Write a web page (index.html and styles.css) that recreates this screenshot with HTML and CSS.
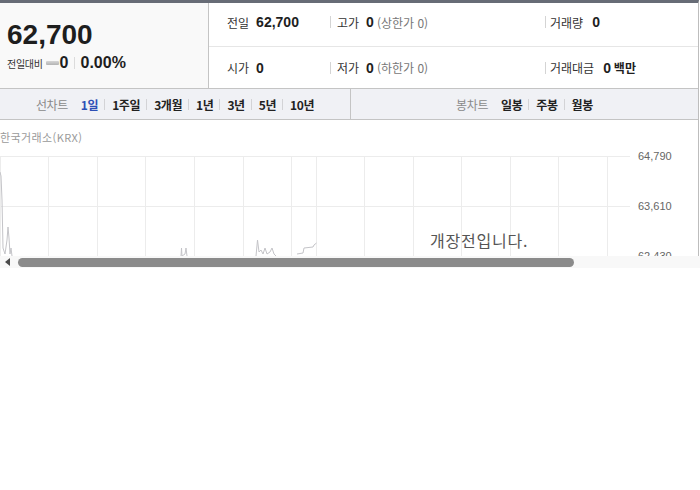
FILE: index.html
```html
<!DOCTYPE html>
<html lang="ko">
<head>
<meta charset="utf-8">
<title>시세</title>
<link rel="stylesheet" href="styles.css">
</head>
<body>
<div class="wrap">
  <div class="summary">
    <div class="price">
      <div class="now">62,700</div>
      <div class="change">
        <span class="lbl">전일대비</span><span class="flat"></span><span class="num">0</span><span class="vsep"></span><span class="num">0.00%</span>
      </div>
    </div>
    <div class="info">
      <div class="cell top first"><span class="k">전일</span><b class="v">62,700</b></div>
      <div class="cell top sep"><span class="k">고가</span><b class="v">0</b><span class="sub">(상한가 0)</span></div>
      <div class="cell top sep last"><span class="k wide">거래량</span><b class="v">0</b></div>
      <div class="cell first"><span class="k">시가</span><b class="v">0</b></div>
      <div class="cell sep"><span class="k">저가</span><b class="v">0</b><span class="sub">(하한가 0)</span></div>
      <div class="cell sep last"><span class="k wide">거래대금</span><b class="v">0 <span class="unit">백만</span></b></div>
    </div>
  </div>
  <div class="tabs">
    <div class="group left">
      <span class="gl">선차트</span>
      <span class="it on">1일</span><span class="ts"></span>
      <span class="it">1주일</span><span class="ts"></span>
      <span class="it">3개월</span><span class="ts"></span>
      <span class="it">1년</span><span class="ts"></span>
      <span class="it">3년</span><span class="ts"></span>
      <span class="it">5년</span><span class="ts"></span>
      <span class="it">10년</span>
    </div>
    <div class="group">
      <span class="gl">봉차트</span>
      <span class="it">일봉</span><span class="ts"></span>
      <span class="it">주봉</span><span class="ts"></span>
      <span class="it">월봉</span>
    </div>
  </div>
  <div class="chart">
    <div class="chart-label">한국거래소(KRX)</div>
    <svg class="plot" width="697" height="106" viewBox="0 0 697 106">
      <g stroke="#ececec" stroke-width="1" fill="none" shape-rendering="crispEdges">
        <line x1="0" y1="6.5" x2="630" y2="6.5"/>
        <line x1="0" y1="56.5" x2="630" y2="56.5"/>
        <line x1="0.5" y1="6" x2="0.5" y2="106"/>
        <line x1="48.5" y1="6" x2="48.5" y2="106"/>
        <line x1="97.5" y1="6" x2="97.5" y2="106"/>
        <line x1="145.5" y1="6" x2="145.5" y2="106"/>
        <line x1="194.5" y1="6" x2="194.5" y2="106"/>
        <line x1="243.5" y1="6" x2="243.5" y2="106"/>
        <line x1="291.5" y1="6" x2="291.5" y2="106"/>
        <line x1="316.5" y1="6" x2="316.5" y2="106"/>
        <line x1="364.5" y1="6" x2="364.5" y2="106"/>
        <line x1="413.5" y1="6" x2="413.5" y2="106"/>
        <line x1="461.5" y1="6" x2="461.5" y2="106"/>
        <line x1="510.5" y1="6" x2="510.5" y2="106"/>
        <line x1="558.5" y1="6" x2="558.5" y2="106"/>
        <line x1="607.5" y1="6" x2="607.5" y2="106"/>
      </g>
      <g stroke="#c4c4c8" stroke-width="1" fill="none">
        <polyline points="0,22 1,26 2,50 3,98 5,104 7,90 8,77 9,88 10,104 11,98 12,106"/>
        <polyline points="181,106 181.5,98 182,106 185,104 186,98 187,106"/>
        <polyline points="256,106 257.5,90 259,102 261,100 263,104 265,98 267,104 270,102 272,98 274,104 276,106"/>
        <polyline points="297,104 303,103 304,98 313,97 314,95 316.5,93"/>
      </g>
      <g class="axis">
        <text x="638" y="10">64,790</text>
        <text x="638" y="60">63,610</text>
        <text x="638" y="110">62,430</text>
      </g>
    </svg>
    <div class="msg">개장전입니다.</div>
  </div>
</div>
<div class="hscroll">
  <span class="arrow"></span>
  <span class="thumb"></span>
</div>
</body>
</html>
```

FILE: styles.css
```css
* { box-sizing: border-box; margin: 0; padding: 0; }
html, body { background: #fff; }
body {
  margin: 0;
  width: 700px;
  font-family: "Liberation Sans", "Noto Sans CJK KR", sans-serif;
  color: #222;
}
.wrap {
  width: 699px;
  border-top: 3px solid #676c76;
  border-right: 1px solid #bdbdbd;
}
.summary {
  display: flex;
  height: 86px;
  border-bottom: 1px solid #c4c4c4;
}
.price {
  width: 209px;
  background: #f9f9f9;
  border-right: 1px solid #c4c4c4;
  padding: 18px 0 0 7px;
}
.now {
  font-size: 28px;
  line-height: 28px;
  font-weight: bold;
  color: #1e1e1e;
}
.change {
  display: flex;
  align-items: center;
  height: 18px;
  margin-top: 5px;
}
.change .lbl {
  font-family: "Noto Sans CJK KR", sans-serif;
  font-size: 10px;
  color: #333;
  letter-spacing: -0.3px;
}
.flat {
  display: inline-block;
  width: 13px;
  height: 4px;
  margin: 0 1px 0 3px;
  background: linear-gradient(#d6d6d6, #b3b3b3);
  border-radius: 1px;
}
.change .num {
  font-size: 16px;
  font-weight: bold;
  color: #1e1e1e;
}
.vsep {
  display: inline-block;
  width: 1px;
  height: 12px;
  background: #dcdcdc;
  margin: 0 6px 0 5px;
}
.info {
  flex: 1;
  display: grid;
  grid-template-columns: 121px 215px 1fr;
  grid-template-rows: 44px 41px;
}
.cell {
  display: flex;
  align-items: center;
  font-size: 12px;
}
.cell.top {
  border-bottom: 1px solid #e6e6e6;
  padding-bottom: 5px;
}
.cell.first { padding-left: 18px; }
.cell.sep::before {
  content: "";
  display: inline-block;
  width: 1px;
  height: 12px;
  background: #d4d4d4;
  margin-right: 6px;
}
.cell.last::before { margin-right: 4px; }
.k {
  font-family: "Noto Sans CJK KR", sans-serif;
  font-size: 12px;
  color: #333;
  margin-right: 7px;
}
.k.wide { margin-right: 9px; }
.v {
  font-family: "Liberation Sans", "Noto Sans CJK KR", sans-serif;
  font-size: 14px;
  font-weight: bold;
  color: #1e1e1e;
}
.unit {
  font-family: "Noto Sans CJK KR", sans-serif;
  font-size: 12px;
  margin-left: -1px;
}
.sub {
  font-family: "Noto Sans CJK KR", sans-serif;
  font-size: 12px;
  color: #777;
  margin-left: 3px;
}
.tabs {
  display: flex;
  height: 31px;
  background: #f0f1f5;
  border-bottom: 1px solid #c4c4c4;
}
.group {
  flex: 1;
  display: flex;
  align-items: center;
  justify-content: center;
  font-family: "Noto Sans CJK KR", sans-serif;
  font-size: 12px;
  letter-spacing: -0.4px;
}
.group.left {
  flex: 0 0 351px;
  border-right: 1px solid #c4c4c4;
}
.gl {
  color: #8a8a8a;
  margin-right: 13px;
}
.it {
  font-weight: bold;
  color: #222;
}
.it.on { color: #2c4fb5; }
.ts {
  display: inline-block;
  width: 1px;
  height: 11px;
  background: #d3d3d6;
  margin: 0 7px 0 6px;
}
.chart {
  position: relative;
  height: 136px;
  overflow: hidden;
}
.chart-label {
  height: 30px;
  padding-top: 11px;
  line-height: 13px;
  font-family: "Noto Sans CJK KR", sans-serif;
  font-size: 11px;
  color: #9a9a9a;
  letter-spacing: 0.4px;
}
.plot {
  display: block;
  overflow: visible;
}
.axis text {
  font-family: "Liberation Sans", sans-serif;
  font-size: 11px;
  fill: #666;
}
.msg {
  position: absolute;
  left: 430px;
  top: 109px;
  font-family: "Noto Sans CJK KR", sans-serif;
  font-size: 16px;
  line-height: 22px;
  color: #555;
  letter-spacing: 0.8px;
}
.hscroll {
  display: flex;
  align-items: center;
  height: 12px;
  width: 700px;
  background: #f8f8f8;
}
.arrow {
  display: inline-block;
  width: 0;
  height: 0;
  margin-left: 5px;
  border-top: 4px solid transparent;
  border-bottom: 4px solid transparent;
  border-right: 5px solid #4a4a4a;
}
.thumb {
  display: inline-block;
  width: 556px;
  height: 9px;
  margin-left: 8px;
  background: #8b8b8b;
  border-radius: 5px;
}
```
